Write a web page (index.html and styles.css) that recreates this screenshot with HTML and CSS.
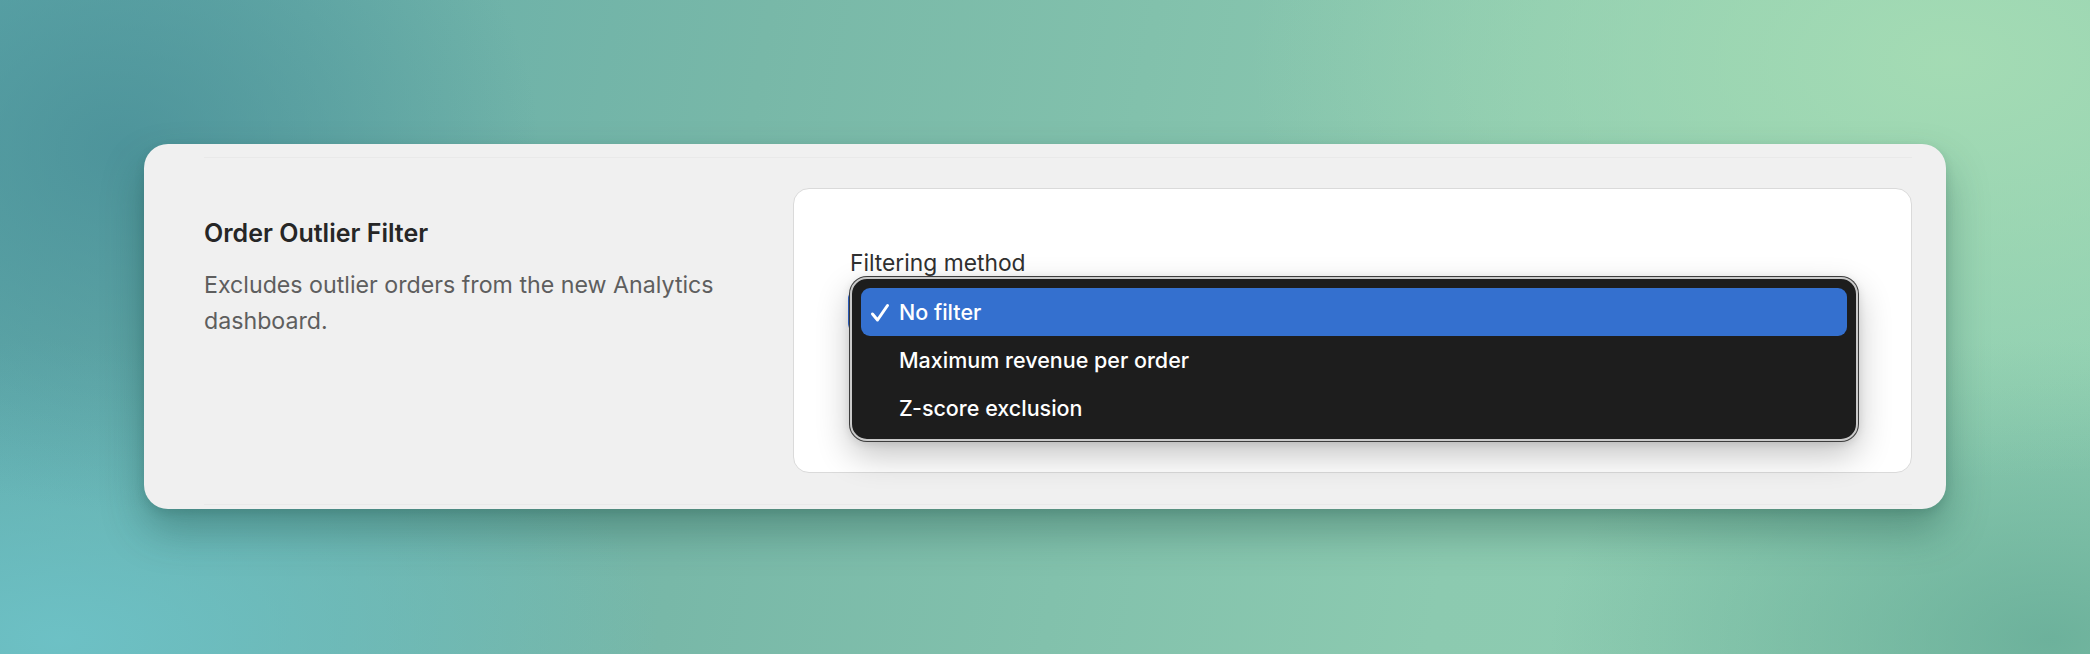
FILE: index.html
```html
<!DOCTYPE html>
<html lang="en">
<head>
<meta charset="utf-8">
<title>Order Outlier Filter</title>
<link rel="stylesheet" href="styles.css">
</head>
<body>
<div class="page">
  <section class="card">
    <div class="row">
      <div class="info">
        <h2 class="title">Order Outlier Filter</h2>
        <p class="desc">Excludes outlier orders from the new Analytics dashboard.</p>
      </div>
      <div class="panel">
        <div class="label">Filtering method</div>
        <div class="select-wrap">
          <div class="select"></div>
          <div class="menu">
            <div class="item active">
              <svg class="check" viewBox="0 0 20 20" width="20" height="20"><polyline points="2.5,11 7.5,17 17.5,2.5" fill="none" stroke="#fff" stroke-width="3" stroke-linecap="round" stroke-linejoin="round"/></svg>
              <span>No filter</span>
            </div>
            <div class="item"><span>Maximum revenue per order</span></div>
            <div class="item"><span>Z-score exclusion</span></div>
          </div>
        </div>
      </div>
    </div>
  </section>
</div>
</body>
</html>
```
FILE: styles.css
```css
html, body {
  margin: 0;
  padding: 0;
}
body {
  width: 2090px;
  height: 654px;
  overflow: hidden;
  font-family: Inter, "Liberation Sans", sans-serif;
  background:
    radial-gradient(ellipse 420px 360px at 120px 150px, rgba(70,140,150,0.75), rgba(70,140,150,0) 100%),
    radial-gradient(ellipse 700px 420px at 1950px 60px, rgba(165,220,180,0.95), rgba(165,220,180,0) 100%),
    radial-gradient(ellipse 600px 300px at 60px 640px, rgba(110,195,200,0.9), rgba(110,195,200,0) 100%),
    radial-gradient(ellipse 500px 300px at 2050px 640px, rgba(100,170,150,0.8), rgba(100,170,150,0) 100%),
    linear-gradient(100deg, #5fa9aa 0%, #78b8a8 35%, #8ccab0 70%, #8fcfb2 100%);
}
.page {
  padding: 144px 144px 0 144px;
}
.card {
  background: #f0f0f0;
  border-radius: 24px;
  padding: 13px 34px 4px 60px;
  box-shadow: 0 22px 40px rgba(20, 70, 60, 0.35), 0 4px 10px rgba(20, 70, 60, 0.15);
}
.row {
  display: flex;
  gap: 49px;
  border-top: 1px solid #e9e9e9;
  border-bottom: 1px solid #e9e9e9;
  padding: 30px 0 31px 0;
}
.info {
  width: 540px;
  flex: none;
  padding-top: 29px;
}
.title {
  margin: 0;
  font-size: 25px;
  line-height: 32px;
  font-weight: 600;
  color: #262626;
}
.desc {
  margin: 18px 0 0 0;
  font-size: 23.2px;
  line-height: 36px;
  color: #5e5e5e;
}
.panel {
  flex: 1;
  background: #ffffff;
  border: 1px solid #dadada;
  border-radius: 16px;
  padding: 59px 54px 0 54px;
  box-sizing: content-box;
  height: 224px;
}
.label {
  margin-left: 2px;
  font-size: 22.8px;
  line-height: 30px;
  color: #303030;
}
.select-wrap {
  position: relative;
  margin-top: 9px;
  height: 48px;
}
.select {
  height: 100%;
  border-radius: 12px;
  background: linear-gradient(90deg, #2f66d0 0%, #2b5fc6 85%, #102a6a 100%);
}
.menu {
  position: absolute;
  left: 2px;
  right: -1px;
  top: -10px;
  box-sizing: border-box;
  height: 164px;
  padding: 9px 9px;
  background: #1d1d1d;
  border: 2px solid #c9c9c9;
  border-radius: 17px;
  box-shadow: 0 0 0 1px #3c3c3c, 0 14px 34px rgba(0, 0, 0, 0.24), 0 2px 10px rgba(0, 0, 0, 0.12);
}
.item {
  height: 48px;
  display: flex;
  align-items: center;
  padding-left: 38px;
  border-radius: 9px;
  color: #ffffff;
  font-size: 21.5px;
  font-weight: 500;
  position: relative;
}
.item.active {
  background: #3470cf;
}
.check {
  position: absolute;
  left: 9px;
  top: 15px;
}
```
